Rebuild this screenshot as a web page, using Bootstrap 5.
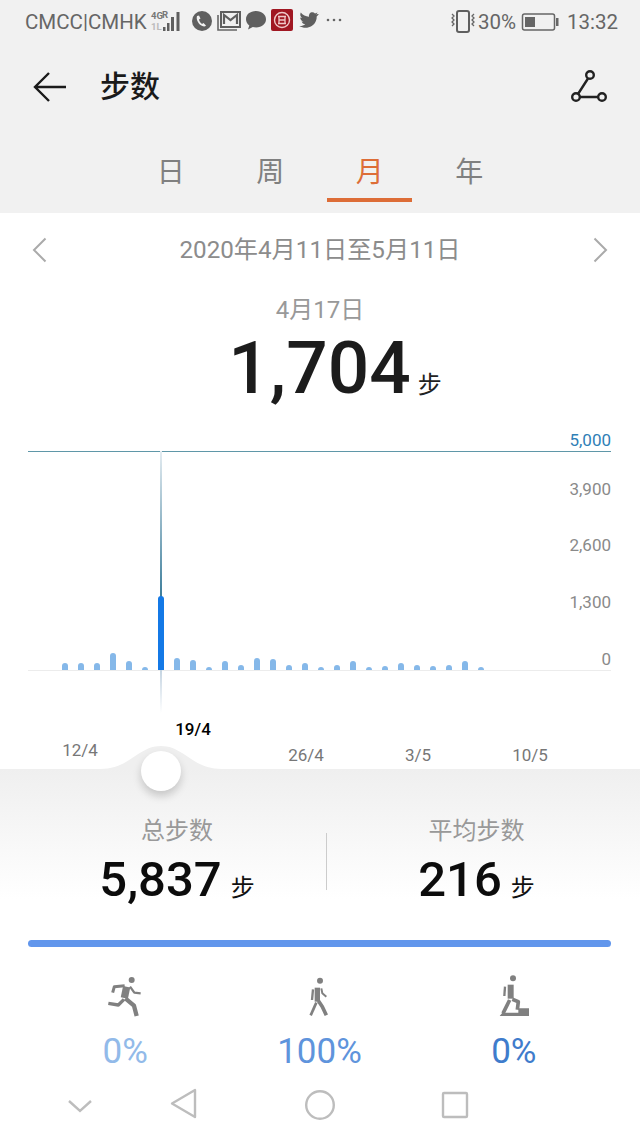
<!DOCTYPE html>
<html lang="zh-CN">
<head>
  <meta charset="UTF-8">
  <title>步数</title>
  <link href="https://cdn.jsdelivr.net/npm/bootstrap@5.3.0/dist/css/bootstrap.min.css" rel="stylesheet">
  <style>
    body { width: 640px; height: 1138px; overflow: hidden; background: #fff; font-family: Roboto, "Noto Sans CJK SC", sans-serif; }
    .top-area { background: #f1f1f1; height: 213px; }
    .status-row { height: 44px; padding: 0 22px 0 25px; font-size: 20.5px; color: #666; }
    .app-row { height: 86px; padding: 0 33px; }
    .app-title { font-size: 30px; font-weight: 500; color: #1a1a1a; margin-left: 34px; line-height: 1; }
    .tab-row { height: 83px; }
    .tab-item { width: 99.5px; padding-top: 22px; text-align: center; font-size: 28px; line-height: 42px; color: #808080; }
    .tab-item.is-on { color: #dd6d37; }
    .tab-line { width: 85px; height: 4px; margin: 4px auto 0; }
    .tab-item.is-on .tab-line { background: #dd6d37; }
    .date-row { height: 74px; padding: 0 32px; font-size: 24.2px; color: #8c8c8c; }
    .day-row { height: 46px; line-height: 46px; font-size: 24px; color: #999; text-align: center; }
    .big-row { height: 70px; line-height: 70px; padding-left: 30px; }
    .big-num { font-size: 73px; font-weight: 500; color: #1c1c1c; }
    .unit-txt { font-size: 24px; color: #222; margin-left: 7px; }
    .chart-box { height: 366px; z-index: 1; }
    .goal-line { left: 28px; width: 583px; top: 48px; height: 1px; background: #5f97a8; }
    .base-line { left: 28px; width: 583px; top: 267px; height: 1px; background: #ececec; }
    .pick-line { left: 160px; top: 48px; height: 262px; width: 2px; background: linear-gradient(#e4ecf1, #3f7f9c 55%, #c6d5e2 84%, rgba(200,215,225,0)); }
    .bars-row { left: 62px; bottom: 99px; gap: 10px; align-items: flex-end; }
    .bar-item { width: 6px; background: #85b8e9; border-radius: 3px 3px 0 0; }
    .bar-item.is-on { background: #1479e6; }
    .y-label { right: 29px; font-size: 17px; line-height: 20px; color: #8a8a8a; }
    .y-label.is-goal { color: #2f80b6; }
    .x-label { transform: translateX(-50%); font-size: 17px; line-height: 20px; color: #777; }
    .x-label.is-on { color: #000; font-weight: 500; }
    .bump { left: 100px; bottom: 0; }
    .thumb { left: 141px; top: 348px; width: 40px; height: 40px; border-radius: 50%; background: #fff; box-shadow: 0 5px 9px rgba(0,0,0,.18); }
    .lower-area { height: 369px; padding: 0 29px 0 28px; background: linear-gradient(#efefef, #fff 130px); }
    .sum-wrap { padding-top: 45px; }
    .sum-left { flex: 0 0 298px; text-align: center; }
    .sum-right { flex: 1; padding-left: 15px; text-align: center; }
    .sum-rule { width: 1px; height: 57px; margin-top: 19px; background: #ccc; }
    .sum-label { font-size: 24px; line-height: 34px; color: #999; }
    .sum-value { margin-top: 2px; line-height: 60px; height: 60px; }
    .sum-num { font-size: 49px; font-weight: 500; color: #0c0c0c; }
    .sum-value .unit-txt { color: #111; margin-left: 9px; }
    .total-bar { height: 7px; margin-top: 30px; border-radius: 4px; background: #6196ec; }
    .mode-row { margin-top: 23px; }
    .mode-col { text-align: center; }
    .mode-col svg { display: block; margin: 0 auto; }
    .mode-pct { margin-top: 10px; font-size: 35px; line-height: 44px; }
    .pct-a { color: #92bae9; }
    .pct-b { color: #5f94dc; }
    .pct-c { color: #3f7ccc; }
    .sys-row { height: 64px; margin: 0 -29px 0 -28px; }
    .sys-down { left: 68px; top: 25px; }
    .sys-back { left: 170px; top: 14px; }
    .sys-home { left: 304px; top: 15px; }
    .sys-recent { left: 441px; top: 17px; }
    .tiny-txt { font-family: Roboto, sans-serif; font-size: 9.500px; font-weight: 700; }
  </style>
</head>
<body>
  <div class="top-area">
    <div class="status-row d-flex align-items-center justify-content-between">
      <div class="d-flex align-items-center">
        <span>CMCC|CMHK</span>
        <svg width="195" height="26" viewBox="-3 0 195 26">
          <text x="1" y="10" class="tiny-txt" fill="#777">4G</text>
          <text x="12" y="9" class="tiny-txt" fill="#777">R</text>
          <text x="1" y="21" class="tiny-txt" fill="#bbb">1L</text>
          <g fill="#5f5f5f">
            <rect x="13" y="18" width="2.500" height="4"/><rect x="17" y="14" width="2.500" height="8"/><rect x="21" y="8" width="3" height="14"/><rect x="26.500" y="3" width="3" height="19"/>
            <circle cx="52" cy="12" r="10"/>
          </g>
          <path d="M47 7c-1 3 1 7 3.500 9 2 1.500 4.500 2 5.500 .5l-2.500-2.500-1.500 1c-1.500-1-2.800-3-3-4.500l1.500-1-1.500-3z" fill="#f1f1f1"/>
          <path d="M68 6v15h19" fill="none" stroke="#666" stroke-width="1.600"/>
          <rect x="71" y="3" width="19" height="15" fill="none" stroke="#5f5f5f" stroke-width="2"/>
          <path d="M74 15V6l6.500 5 6.500-5v9" fill="none" stroke="#5f5f5f" stroke-width="2.200"/>
          <path d="M106 2c-6 0-10 3.600-10 8.200 0 2.600 1.300 4.700 3.300 6.200l-1.300 4 4.800-2.400c1 .3 2.100 .4 3.200 .4 6 0 10-3.700 10-8.200S112 2 106 2z" fill="#5f5f5f"/>
          <rect x="121" y="0" width="22" height="22" rx="2" fill="#a01722"/>
          <circle cx="132" cy="11" r="7.500" fill="none" stroke="#f0c9c9" stroke-width="1.400"/>
          <path d="M128 7.500h8M128 14.500h8M129 7.500v7M135 7.500v7M129 11h6" fill="none" stroke="#f0c9c9" stroke-width="1.300"/>
          <path d="M168 5c-.7 .3-1.400 .5-2.200 .6 .8-.5 1.400-1.200 1.700-2.100-.8 .4-1.600 .8-2.500 1-1.600-1.700-4.300-1.400-5.500 .3-.6 .9-.8 2-.5 3-3.300-.2-6.200-1.700-8.200-4.200-1.100 1.800-.5 4.200 1.200 5.300-.6 0-1.200-.2-1.800-.5 0 1.900 1.300 3.500 3.200 3.900-.6 .2-1.200 .2-1.800 .1 .5 1.600 2 2.700 3.700 2.800-1.700 1.300-3.800 1.900-6 1.700 6 3.800 14 1.400 16.600-5 .6-1.400 .9-2.900 .8-4.400 .9-.7 1.600-1.500 2.100-2.500z" fill="#5f5f5f"/>
          <g fill="#666"><circle cx="178" cy="11" r="1.300"/><circle cx="184" cy="11" r="1.300"/><circle cx="190" cy="11" r="1.300"/></g>
        </svg>
      </div>
      <div class="d-flex align-items-center">
        <svg width="30" height="26" viewBox="1 0 26 26">
          <rect x="8" y="2" width="12" height="21" rx="2" fill="none" stroke="#5f5f5f" stroke-width="2"/>
          <path d="M3 5l2 2-2 2 2 2-2 2 2 2-2 2M25 5l-2 2 2 2-2 2 2 2-2 2 2 2" fill="none" stroke="#666" stroke-width="1.300"/>
        </svg>
        <span>30%</span>
        <svg width="51" height="20" viewBox="0 0 51 20">
          <rect x="6.500" y="2" width="32" height="16" rx="2" fill="none" stroke="#666" stroke-width="1.500"/>
          <rect x="9" y="5" width="10" height="10" fill="#666"/>
          <rect x="40" y="6" width="2.500" height="8" fill="#666"/>
        </svg>
        <span>13:32</span>
      </div>
    </div>
    <div class="app-row d-flex align-items-center">
      <svg width="33" height="30" viewBox="0 0 33 30">
        <path d="M16 1L2 15l14 14M2 15h31" fill="none" stroke="#1a1a1a" stroke-width="2.400"/>
      </svg>
      <div class="app-title">步数</div>
      <svg class="ms-auto" width="36" height="34" viewBox="0 0 36 34">
        <circle cx="19" cy="5" r="3.800" fill="none" stroke="#222" stroke-width="2.400"/>
        <circle cx="5" cy="27" r="3.800" fill="none" stroke="#222" stroke-width="2.400"/>
        <circle cx="31" cy="27" r="3.800" fill="none" stroke="#222" stroke-width="2.400"/>
        <path d="M17 8.500L7 24M9 27h18" fill="none" stroke="#222" stroke-width="2.400"/>
      </svg>
    </div>
    <div class="tab-row d-flex justify-content-center">
      <div class="tab-item">日<div class="tab-line"></div></div>
      <div class="tab-item">周<div class="tab-line"></div></div>
      <div class="tab-item is-on">月<div class="tab-line"></div></div>
      <div class="tab-item">年<div class="tab-line"></div></div>
    </div>
  </div>

  <div class="date-row d-flex align-items-center justify-content-between">
    <svg width="15" height="26" viewBox="0 0 15 26"><path d="M13.500 1.500L2 13l11.500 11.500" fill="none" stroke="#aaa" stroke-width="2"/></svg>
    <span>2020年4月11日至5月11日</span>
    <svg width="15" height="26" viewBox="0 0 15 26"><path d="M1.500 1.500L13 13 1.500 24.500" fill="none" stroke="#aaa" stroke-width="2"/></svg>
  </div>
  <div class="day-row">4月17日</div>
  <div class="big-row d-flex justify-content-center align-items-baseline">
    <span class="big-num">1,704</span><span class="unit-txt">步</span>
  </div>

  <div class="chart-box position-relative">
    <span class="y-label is-goal position-absolute" style="top:27px">5,000</span>
    <span class="y-label position-absolute" style="top:76px">3,900</span>
    <span class="y-label position-absolute" style="top:132px">2,600</span>
    <span class="y-label position-absolute" style="top:189px">1,300</span>
    <span class="y-label position-absolute" style="top:246px">0</span>
    <div class="goal-line position-absolute"></div>
    <div class="base-line position-absolute"></div>
    <div class="pick-line position-absolute"></div>
    <div class="bars-row d-flex position-absolute">
      <div class="bar-item" style="height:7px"></div>
      <div class="bar-item" style="height:7px"></div>
      <div class="bar-item" style="height:7px"></div>
      <div class="bar-item" style="height:17px"></div>
      <div class="bar-item" style="height:9px"></div>
      <div class="bar-item" style="height:3px"></div>
      <div class="bar-item is-on" style="height:74px"></div>
      <div class="bar-item" style="height:12px"></div>
      <div class="bar-item" style="height:10px"></div>
      <div class="bar-item" style="height:3px"></div>
      <div class="bar-item" style="height:9px"></div>
      <div class="bar-item" style="height:5px"></div>
      <div class="bar-item" style="height:12px"></div>
      <div class="bar-item" style="height:11px"></div>
      <div class="bar-item" style="height:5px"></div>
      <div class="bar-item" style="height:7px"></div>
      <div class="bar-item" style="height:3px"></div>
      <div class="bar-item" style="height:5px"></div>
      <div class="bar-item" style="height:9px"></div>
      <div class="bar-item" style="height:3px"></div>
      <div class="bar-item" style="height:4px"></div>
      <div class="bar-item" style="height:7px"></div>
      <div class="bar-item" style="height:5px"></div>
      <div class="bar-item" style="height:4px"></div>
      <div class="bar-item" style="height:5px"></div>
      <div class="bar-item" style="height:9px"></div>
      <div class="bar-item" style="height:3px"></div>
    </div>
    <span class="x-label position-absolute" style="left:80px;top:337px">12/4</span>
    <span class="x-label is-on position-absolute" style="left:193px;top:316px">19/4</span>
    <span class="x-label position-absolute" style="left:306px;top:342px">26/4</span>
    <span class="x-label position-absolute" style="left:418px;top:342px">3/5</span>
    <span class="x-label position-absolute" style="left:530px;top:342px">10/5</span>
    <svg class="bump position-absolute" width="122" height="24" viewBox="0 0 122 24">
      <path d="M0 24C30 24 38 1 61 1S92 24 122 24z" fill="#efefef"/>
    </svg>
    <div class="thumb position-absolute"></div>
  </div>

  <div class="lower-area">
    <div class="sum-wrap d-flex">
      <div class="sum-left">
        <div class="sum-label">总步数</div>
        <div class="sum-value d-flex justify-content-center align-items-baseline"><span class="sum-num">5,837</span><span class="unit-txt">步</span></div>
      </div>
      <div class="sum-rule"></div>
      <div class="sum-right">
        <div class="sum-label">平均步数</div>
        <div class="sum-value d-flex justify-content-center align-items-baseline"><span class="sum-num">216</span><span class="unit-txt">步</span></div>
      </div>
    </div>
    <div class="total-bar"></div>
    <div class="mode-row row g-0">
      <div class="mode-col col-4">
        <svg width="50" height="50" viewBox="0 0 150 150">
          <circle cx="95" cy="30" r="9" fill="#808080"/>
          <g fill="none" stroke="#808080" stroke-linejoin="round">
            <path d="M74 47L43 50l-5 18" stroke-width="9"/>
            <path d="M80 50L73 84" stroke-width="22"/>
            <path d="M90 50l13 18 19 2" stroke-width="7"/>
            <path d="M76 85l26 22 8 31" stroke-width="13"/>
            <path d="M72 88l-17 17-30-5" stroke-width="10"/>
          </g>
        </svg>
        <div class="mode-pct pct-a">0%</div>
      </div>
      <div class="mode-col col-4">
        <svg width="50" height="50" viewBox="705 30 150 150">
          <circle cx="783" cy="62" r="9" fill="#808080"/>
          <g fill="none" stroke="#808080" stroke-linejoin="round">
            <path d="M775 83v42" stroke-width="16"/>
            <path d="M762 88l-3 32" stroke-width="7"/>
            <path d="M787 85l3 15 12 10" stroke-width="6"/>
            <path d="M772 128l-17 38" stroke-width="8"/>
            <path d="M778 122l12 18 12 26" stroke-width="11"/>
          </g>
        </svg>
        <div class="mode-pct pct-b">100%</div>
      </div>
      <div class="mode-col col-4">
        <svg width="50" height="50" viewBox="0 0 150 150">
          <circle cx="72" cy="25" r="9" fill="#808080"/>
          <path d="M32 138l8-10h48v-13h32v23z" fill="#808080"/>
          <g fill="none" stroke="#808080" stroke-linejoin="round">
            <path d="M65 44v42" stroke-width="18"/>
            <path d="M48 50l-2 28" stroke-width="7"/>
            <path d="M62 90l-20 40" stroke-width="11"/>
            <path d="M70 88l18 7-3 24" stroke-width="11"/>
          </g>
        </svg>
        <div class="mode-pct pct-c">0%</div>
      </div>
    </div>
    <div class="sys-row position-relative">
      <svg class="sys-down position-absolute" width="24" height="14" viewBox="0 0 24 14"><path d="M1 2l11 10L23 2" fill="none" stroke="#bdbdbd" stroke-width="2.400"/></svg>
      <svg class="sys-back position-absolute" width="27" height="31" viewBox="0 0 27 31"><path d="M25 2v27L2 15.500z" fill="none" stroke="#bdbdbd" stroke-width="2.400" stroke-linejoin="round"/></svg>
      <svg class="sys-home position-absolute" width="32" height="32" viewBox="0 0 32 32"><circle cx="16" cy="16" r="13.800" fill="none" stroke="#bdbdbd" stroke-width="2.400"/></svg>
      <svg class="sys-recent position-absolute" width="28" height="28" viewBox="0 0 28 28"><rect x="2" y="2" width="24" height="24" rx="1" fill="none" stroke="#bdbdbd" stroke-width="2.400"/></svg>
    </div>
  </div>
</body>
</html>
